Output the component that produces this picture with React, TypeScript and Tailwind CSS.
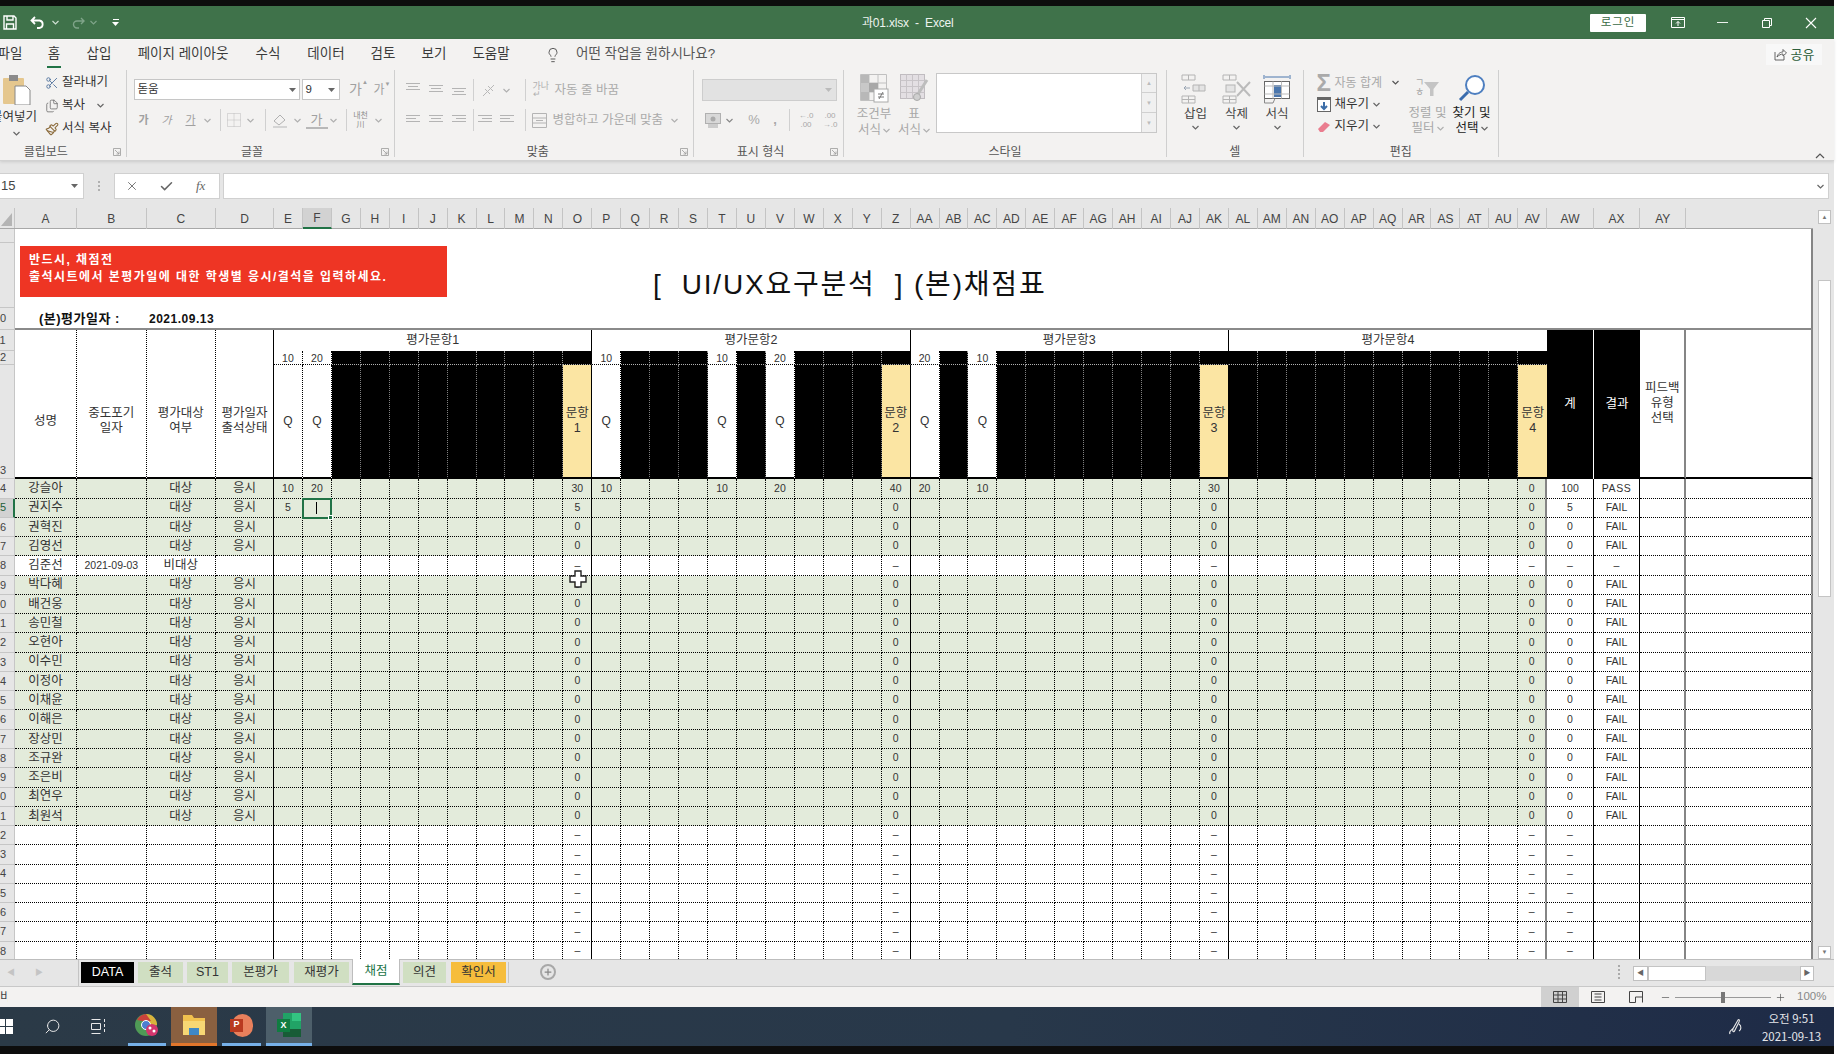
import React from "react";
import { Scissors, Files, Paintbrush, Lightbulb, Search, X, Check, Minus, Plus } from "lucide-react";

const COLS = ["A","B","C","D","E","F","G","H","I","J","K","L","M","N","O","P","Q","R","S","T","U","V","W","X","Y","Z","AA","AB","AC","AD","AE","AF","AG","AH","AI","AJ","AK","AL","AM","AN","AO","AP","AQ","AR","AS","AT","AU","AV","AW","AX","AY",""];
const GRID = "grid grid-cols-[62px_69.7px_69.3px_58px_repeat(44,28.95px)_46.6px_46.4px_46px_126.5px]";
const Q: Record<number, string> = { 4: "10", 5: "20", 15: "10", 19: "10", 21: "20", 26: "20", 28: "10" };
const SUMS: Record<number, string> = { 14: "1", 25: "2", 36: "3", 47: "4" };
const ROW14: Record<number, string> = { 4: "10", 5: "20", 14: "30", 15: "10", 19: "10", 21: "20", 25: "40", 26: "20", 28: "10", 36: "30", 47: "0", 48: "100", 49: "PASS" };
const ROW15: Record<number, string> = { 4: "5", 14: "5", 25: "0", 36: "0", 47: "0", 48: "5", 49: "FAIL" };
const ROWN: Record<number, string> = { 14: "0", 25: "0", 36: "0", 47: "0", 48: "0", 49: "FAIL" };
const ROWD: Record<number, string> = { 14: "–", 25: "–", 36: "–", 47: "–", 48: "–", 49: "–" };
const ROWB: Record<number, string> = { 14: "–", 25: "–", 36: "–", 47: "–", 48: "–" };
const NAMES = ["강슬아","권지수","권혁진","김영선","김준선","박다혜","배건웅","송민철","오현아","이수민","이정아","이채윤","이해은","장상민","조규완","조은비","최연우","최원석"];

function vr(i: number) {
  if (i === 3 || i === 14 || i === 25 || i === 36 || i === 48 || i === 49) return "border-r border-r-black";
  if (i === 47 || i === 50 || i === 51) return "border-r-2 border-r-[#858585]";
  return "border-r border-r-black [border-right-style:dotted]";
}

function Chev({ c = "#666", cls = "" }: { c?: string; cls?: string }) {
  return (
    <svg width="7" height="5" viewBox="0 0 7 5" className={cls}>
      <polyline points="0.5,1 3.5,4 6.5,1" fill="none" stroke={c} strokeWidth="1.2" />
    </svg>
  );
}
function Caret({ c = "#666" }: { c?: string }) {
  return (
    <svg width="7" height="4" viewBox="0 0 7 4">
      <polygon points="0,0 7,0 3.5,4" fill={c} />
    </svg>
  );
}
function Launcher() {
  return (
    <svg width="8" height="8" viewBox="0 0 8 8">
      <path d="M0.5 0.5H7.5V7.5H0.5Z M2 2L6 6 M6 3.5V6H3.5" fill="none" stroke="#9a9a9a" strokeWidth="0.8" />
    </svg>
  );
}
function Lines({ y = 0, align = "c" }: { y?: number; align?: string }) {
  const a = align === "l" ? [[0, 14], [0, 10], [0, 14]] : align === "r" ? [[0, 14], [4, 14], [0, 14]] : [[0, 14], [2, 12], [0, 14]];
  return (
    <svg width="14" height="14" viewBox="0 0 14 14">
      {a.map((p, i) => (
        <line key={i} x1={p[0]} x2={p[1]} y1={y + 2.5 + i * 3} y2={y + 2.5 + i * 3} stroke="#b4b4b4" strokeWidth="1" />
      ))}
    </svg>
  );
}
function Sep() {
  return <div className="w-px h-[22px] bg-[#d0d0d0]" />;
}
function Group({ w, label, lab = "", launcher, children }: { w: string; label: string; lab?: string; launcher?: boolean; children: React.ReactNode }) {
  return (
    <div className={`${w} h-[87px] border-r border-[#cfcfcf] flex flex-col shrink-0`}>
      <div className="h-[75px] flex shrink-0">{children}</div>
      <div className="h-[15px] flex items-center relative">
        <div className={`flex-1 text-center text-[12px] leading-[15px] text-[#555] ${lab}`}>{label}</div>
        {launcher && <div className="absolute right-[5px] top-[3px]"><Launcher /></div>}
      </div>
    </div>
  );
}

function TitleBar() {
  return (
    <div className="h-[33px] bg-[#3f724a] flex items-center text-white shrink-0">
      <svg width="14" height="15" viewBox="0 0 14 15" className="ml-[3px]">
        <path d="M1 1H11L13 3V14H1Z M4 1V5H10V1 M3.5 14V9H10.5V14" fill="none" stroke="#fff" strokeWidth="1.4" />
      </svg>
      <svg width="16" height="14" viewBox="0 0 16 14" className="ml-[13px]">
        <path d="M5 1L1.5 4.5L5 8 M2 4.5H9.5A3.8 3.8 0 0 1 9.5 12H7" fill="none" stroke="#fff" strokeWidth="1.8" />
      </svg>
      <Chev c="#cfe0d3" cls="ml-[6px]" />
      <svg width="14" height="14" viewBox="0 0 14 14" className="ml-[12px]">
        <path d="M10 2L13 5L10 8 M12.5 5H6A3.5 3.5 0 0 0 6 12H8" fill="none" stroke="#7fa489" strokeWidth="1.4" />
      </svg>
      <Chev c="#7fa489" cls="ml-[5px]" />
      <div className="ml-[15px] flex flex-col items-center gap-[2px]">
        <div className="w-[6px] h-px bg-white" />
        <Caret c="#fff" />
      </div>
      <div className="ml-[743px] w-[96px] text-[12px] text-[#eef4ef] whitespace-nowrap tracking-[-0.2px]">과01.xlsx&nbsp; - &nbsp;Excel</div>
      <div className="ml-[632px] w-[56px] h-[18px] bg-white rounded-[1px] flex items-center justify-center text-[11.5px] text-[#3a6a45] tracking-[1px] shrink-0">로그인</div>
      <div className="ml-[10px] w-[44px] flex justify-center">
        <svg width="14" height="11" viewBox="0 0 14 11">
          <path d="M0.5 0.5H13.5V10.5H0.5Z M0.5 2.5H13.5 M7 9V4.5 M5 6.5L7 4.5L9 6.5" fill="none" stroke="#fff" strokeWidth="1" />
        </svg>
      </div>
      <div className="w-[44px] flex justify-center"><div className="w-[11px] h-px bg-white/90" /></div>
      <div className="w-[45px] flex justify-center">
        <svg width="10" height="10" viewBox="0 0 10 10">
          <path d="M0.5 2.5H7.5V9.5H0.5Z M2.5 2.5V0.5H9.5V7.5H7.5" fill="none" stroke="#fff" strokeWidth="1" />
        </svg>
      </div>
      <div className="w-[44px] flex justify-center">
        <svg width="12" height="12" viewBox="0 0 12 12">
          <path d="M1 1L11 11 M11 1L1 11" stroke="#fff" strokeWidth="1.1" />
        </svg>
      </div>
    </div>
  );
}

function TabRow() {
  const t = "flex justify-center whitespace-nowrap shrink-0";
  return (
    <div className="h-[31px] flex items-center text-[13.5px] text-[#3a3a3a]">
      <div className={`w-[20px] ${t}`}>파일</div>
      <div className={`w-[68px] ${t} relative`}>홈<div className="absolute left-[27px] top-[22px] w-[14px] h-[2px] bg-[#217346]" /></div>
      <div className={`w-[22px] ${t}`}>삽입</div>
      <div className={`w-[146px] ${t}`}>페이지 레이아웃</div>
      <div className={`w-[24px] ${t}`}>수식</div>
      <div className={`w-[92px] ${t}`}>데이터</div>
      <div className={`w-[22px] ${t}`}>검토</div>
      <div className={`w-[80px] ${t}`}>보기</div>
      <div className={`w-[34px] ${t}`}>도움말</div>
      <Lightbulb size={16} strokeWidth={1.3} className="ml-[37px] text-[#444] shrink-0" />
      <div className="ml-[15px] text-[#555] whitespace-nowrap">어떤 작업을 원하시나요?</div>
      <div className="flex-1" />
      <div className="mr-[12px] w-[56px] h-[21px] bg-[#f8f8f8] flex items-center justify-center gap-[4px] text-[#2f5f3b] text-[13px] shrink-0">
        <svg width="13" height="13" viewBox="0 0 13 13"><path d="M1 4V12H10V8 M3 9C4 5 7 4 9 4V1.5L12.5 5L9 8V6C7 6 5 7 3 9Z" fill="none" stroke="#555" strokeWidth="0.9" /></svg>
        공유
      </div>
    </div>
  );
}

function Clipboard() {
  return (
    <>
      <div className="w-[45px] flex flex-col items-start shrink-0">
        <svg width="28" height="30" viewBox="0 0 28 30" className="ml-[3px] mt-[5px]">
          <rect x="0" y="3" width="21" height="26" rx="1" fill="#e5c78e" />
          <rect x="6" y="0" width="9" height="6" fill="#8b8b8b" />
          <path d="M12 11H23L27 15V30H12Z" fill="#fff" stroke="#888" strokeWidth="1" />
        </svg>
        <div className="-ml-[9px] mt-[4px] w-[52px] text-[12.5px] leading-[16px] text-[#333] whitespace-nowrap">붙여넣기</div>
        <Chev cls="ml-[13px] mt-[6px]" />
      </div>
      <div className="flex flex-col pt-px text-[12.5px] text-[#333] whitespace-nowrap">
        <div className="h-[23px] flex items-center gap-[3px]"><Scissors size={14} className="text-[#4d6f9a]" strokeWidth={1.5} />잘라내기</div>
        <div className="h-[23px] flex items-center gap-[3px]"><Files size={14} className="text-[#666]" strokeWidth={1.3} />복사<Chev cls="ml-[9px]" /></div>
        <div className="h-[23px] flex items-center gap-[3px]"><Paintbrush size={14} className="text-[#8a6a3a]" strokeWidth={1.8} />서식 복사</div>
      </div>
    </>
  );
}

function FontGroup() {
  const g = "text-[11px] text-[#a0a0a0] flex justify-center";
  return (
    <div className="flex flex-col pl-[7px]">
      <div className="flex items-center h-[21px] mt-[9px]">
        <div className="w-[166px] h-[21px] bg-white border border-[#c6c6c6] flex items-center justify-between px-[3px] text-[11.5px] text-[#333]">돋움<Caret /></div>
        <div className="ml-[2px] w-[38px] h-[21px] bg-white border border-[#c6c6c6] flex items-center justify-between px-[3px] pr-[4px] text-[11.5px] text-[#333]">9<Caret /></div>
        <div className="ml-[8px] w-[22px] text-[#a0a0a0] text-[14px] flex justify-center">가<span className="text-[6px] -mt-[1px]">▲</span></div>
        <div className="ml-[1px] w-[23px] text-[#a0a0a0] text-[12px] flex justify-center">가<span className="text-[6px] -mt-[1px]">▼</span></div>
      </div>
      <div className="flex items-center h-[22px] mt-[9px]">
        <div className={`w-[20px] ${g} font-bold`}>가</div>
        <div className={`w-[26px] ${g} italic`}>가</div>
        <div className={`w-[22px] ${g} underline`}>가</div>
        <div className="w-[12px] flex justify-center"><Chev c="#b0b0b0" /></div>
        <div className="w-[6px]" /><Sep />
        <div className="w-[26px] flex justify-center">
          <svg width="14" height="14" viewBox="0 0 14 14"><path d="M0.5 0.5H13.5V13.5H0.5Z M7 0.5V13.5 M0.5 7H13.5" fill="none" stroke="#bcbcbc" strokeDasharray="1 1" /></svg>
        </div>
        <div className="w-[10px]"><Chev c="#b0b0b0" /></div>
        <div className="w-[8px]" /><Sep />
        <div className="w-[28px] flex justify-center">
          <svg width="16" height="16" viewBox="0 0 16 16"><path d="M2 9L8 3L13 8L7 13Z" fill="none" stroke="#b0b0b0" /><rect x="1" y="14" width="14" height="2" fill="#d4d4d4" /></svg>
        </div>
        <div className="w-[12px]"><Chev c="#b0b0b0" /></div>
        <div className="w-[22px] text-[13px] text-[#a0a0a0] flex justify-center border-b-2 border-[#b8b8b8] leading-[15px]">가</div>
        <div className="w-[12px] flex justify-center"><Chev c="#b0b0b0" /></div>
        <div className="w-[6px]" /><Sep />
        <div className="w-[28px] text-[8px] leading-[9px] text-[#8d8d8d] text-center">내천<br />川</div>
        <div><Chev c="#b0b0b0" /></div>
      </div>
    </div>
  );
}

function AlignGroup() {
  return (
    <div className="flex flex-col pl-[11px]">
      <div className="flex items-center h-[22px] mt-[9px]">
        <div className="w-[23px]"><Lines y={-2} /></div>
        <div className="w-[23px]"><Lines /></div>
        <div className="w-[21px]"><Lines y={3} /></div>
        <Sep />
        <div className="w-[29px] flex justify-center">
          <svg width="15" height="15" viewBox="0 0 15 15"><path d="M2 13L13 2 M4 6L9 11 M7 3L12 8" stroke="#b8b8b8" fill="none" /></svg>
        </div>
        <Chev c="#b0b0b0" />
        <div className="w-[15px]" /><Sep />
        <div className="w-[29px] text-[9px] leading-[8px] text-[#b0b0b0] pl-[7px]">가나<br />↵</div>
        <div className="text-[12.5px] text-[#ababab] whitespace-nowrap">자동 줄 바꿈</div>
      </div>
      <div className="flex items-center h-[22px] mt-[8px]">
        <div className="w-[23px]"><Lines align="l" /></div>
        <div className="w-[23px]"><Lines /></div>
        <div className="w-[21px]"><Lines align="r" /></div>
        <Sep />
        <div className="w-[23px] flex justify-center"><Lines align="r" /></div>
        <div className="w-[21px] flex justify-center"><Lines align="l" /></div>
        <div className="w-[7px]" /><Sep />
        <div className="w-[27px] flex justify-center">
          <svg width="15" height="15" viewBox="0 0 15 15"><path d="M0.5 0.5H14.5V14.5H0.5Z M0.5 5H14.5 M0.5 10H14.5 M4 7.5H11" fill="none" stroke="#b4b4b4" /></svg>
        </div>
        <div className="text-[12.5px] text-[#ababab] whitespace-nowrap">병합하고 가운데 맞춤</div>
        <Chev c="#b0b0b0" cls="ml-[8px]" />
      </div>
    </div>
  );
}

function NumberGroup() {
  return (
    <div className="flex flex-col pl-[8px]">
      <div className="mt-[9px] w-[135px] h-[22px] bg-[#e2e2e2] border border-[#cdcdcd] flex items-center justify-end pr-[4px]"><Caret c="#bbb" /></div>
      <div className="flex items-center h-[22px] mt-[8px] text-[#a8a8a8]">
        <svg width="16" height="15" viewBox="0 0 16 15" className="ml-[3px]"><rect x="0.5" y="0.5" width="15" height="10" fill="#d8d8d8" stroke="#b0b0b0" /><circle cx="8" cy="6" r="2.5" fill="#aaa" /><rect x="3" y="11" width="10" height="4" fill="#ccc" /></svg>
        <Chev c="#888" cls="ml-[5px]" />
        <div className="ml-[12px] w-[18px] text-[13px] text-center">%</div>
        <div className="ml-[7px] w-[10px] text-[13px] font-bold text-center">,</div>
        <div className="ml-[9px]"><Sep /></div>
        <div className="ml-[6px] w-[20px] text-[8px] leading-[9px] text-center">←.0<br />.00</div>
        <div className="ml-[4px] w-[20px] text-[8px] leading-[9px] text-center">.00<br />→.0</div>
      </div>
    </div>
  );
}

function CondIcon() {
  return (
    <svg width="29" height="29" viewBox="0 0 29 29">
      <path d="M0.5 0.5H26.5V26.5H0.5Z M9 0.5V26.5 M18 0.5V26.5 M0.5 9H26.5 M0.5 18H26.5" fill="#f3f2f1" stroke="#c0c0c0" />
      <rect x="1" y="1" width="8" height="8" fill="#b8b8b8" /><rect x="9" y="9" width="9" height="9" fill="#a8a8a8" /><rect x="1" y="9" width="8" height="9" fill="#c8c8c8" /><rect x="1" y="18" width="8" height="8" fill="#b8b8b8" />
      <rect x="14" y="15" width="14" height="13" fill="#fff" stroke="#aaa" />
      <path d="M18 20H24 M18 23H24 M19 25L23 18" stroke="#777" fill="none" />
    </svg>
  );
}
function TableIcon() {
  return (
    <svg width="29" height="29" viewBox="0 0 29 29">
      <rect x="0.5" y="0.5" width="24" height="24" fill="#e3dfe3" stroke="#c0bcc0" />
      <path d="M0.5 6.5H24.5 M0.5 12.5H24.5 M0.5 18.5H24.5 M6.5 0.5V24.5 M12.5 0.5V24.5 M18.5 0.5V24.5" stroke="#c8c4c8" />
      <path d="M27 6L18 20" stroke="#bdbdbd" strokeWidth="3" /><circle cx="17" cy="23" r="3.5" fill="#cfcfcf" stroke="#aaa" />
    </svg>
  );
}
function StyleGroup() {
  return (
    <div className="flex pl-[10px] text-[12.5px] leading-[16px] text-[#a8a8a8]">
      <div className="w-[40px] flex flex-col items-center pt-[4px]"><CondIcon /><div className="mt-[3px] whitespace-nowrap">조건부</div><div className="flex items-center gap-[2px] whitespace-nowrap">서식<Chev c="#b0b0b0" /></div></div>
      <div className="w-[40px] flex flex-col items-center pt-[4px]"><TableIcon /><div className="mt-[3px]">표</div><div className="flex items-center gap-[2px] whitespace-nowrap">서식<Chev c="#b0b0b0" /></div></div>
      <div className="ml-[2px] mt-[3px] w-[221px] h-[60px] bg-white border border-[#c8c8c8] flex justify-end">
        <div className="w-[15px] border-l border-[#d0d0d0] bg-[#f0f0f0] flex flex-col">
          <div className="h-[19px] border-b border-[#d0d0d0] flex items-center justify-center text-[6px] text-[#bbb]">▲</div>
          <div className="h-[20px] border-b border-[#d0d0d0] flex items-center justify-center text-[6px] text-[#bbb]">▼</div>
          <div className="flex-1 flex items-center justify-center text-[6px] text-[#bbb]">▼</div>
        </div>
      </div>
    </div>
  );
}

function CellIcon({ kind }: { kind: string }) {
  if (kind === "format")
    return (
      <svg width="28" height="30" viewBox="0 0 28 30">
        <path d="M1 1V5 M27 1V5 M2 3H26" stroke="#4a76ad" fill="none" />
        <rect x="1.5" y="7.5" width="25" height="17" fill="#fff" stroke="#666" />
        <rect x="11" y="11" width="7" height="12" fill="#4a76ad" />
        <path d="M1.5 12H26.5 M1.5 20H26.5 M10 7.5V24.5 M18.5 7.5V24.5" stroke="#bbb" fill="none" />
        <path d="M1.5 24.5V29H10L12 24.5" stroke="#888" fill="none" />
      </svg>
    );
  return (
    <svg width="30" height="30" viewBox="0 0 30 30">
      <path d="M1 1H14V6H1Z M7.5 1V6 M1 22H14V29H1Z M1 25.5H14 M7.5 22V29" fill="none" stroke="#b4b4b4" />
      {kind === "insert" ? (
        <>
          <path d="M12 11H24V17H12Z M18 11V17" fill="#e4e4e4" stroke="#b4b4b4" />
          <path d="M9 14H3 M5 12L3 14L5 16" stroke="#9aa6b4" fill="none" />
        </>
      ) : (
        <>
          <rect x="4" y="11" width="9" height="7" fill="#e4e4e4" stroke="#b4b4b4" />
          <path d="M15 8L28 22 M28 8L15 22" stroke="#bbb" strokeWidth="2" />
        </>
      )}
    </svg>
  );
}
function CellsGroup() {
  const items: [string, string, string][] = [["insert", "삽입", "w-[41px]"], ["delete", "삭제", "w-[41px]"], ["format", "서식", "w-[40px]"]];
  return (
    <div className="flex pl-[8px]">
      {items.map(([k, l, w]) => (
        <div key={k} className={`${w} flex flex-col items-center pt-[4px] text-[12.5px] leading-[14px] text-[#444]`}>
          <CellIcon kind={k} />
          <div className="mt-[3px]">{l}</div>
          <Chev cls="mt-[4px]" />
        </div>
      ))}
    </div>
  );
}

function EditGroup() {
  return (
    <div className="flex pl-[13px] text-[12.5px] whitespace-nowrap">
      <div className="flex flex-col w-[88px] shrink-0">
        <div className="h-[23px] mt-[1px] flex items-center text-[#a8a8a8]">
          <span className="text-[24px] leading-[20px] font-bold text-[#aaa] w-[18px]">Σ</span><span className="text-[12px]">자동 합계</span><Chev c="#555" cls="ml-[10px]" />
        </div>
        <div className="h-[21px] flex items-center text-[#333] gap-[4px]">
          <svg width="14" height="15" viewBox="0 0 14 15"><rect x="0.5" y="0.5" width="13" height="14" fill="#fff" stroke="#666" /><rect x="0" y="0" width="14" height="3" fill="#666" /><path d="M7 5V12 M4 9L7 12L10 9" stroke="#3d6ea8" strokeWidth="2" fill="none" /></svg>
          채우기<Chev />
        </div>
        <div className="h-[22px] flex items-center text-[#333] gap-[4px]">
          <svg width="14" height="13" viewBox="0 0 14 13"><path d="M1 9L8 2L13 5L6 12H3Z" fill="#ea7d8f" /></svg>
          지우기<Chev />
        </div>
      </div>
      <div className="w-[46px] shrink-0 flex flex-col items-center pt-[5px] leading-[15px] text-[#a8a8a8]">
        <div className="h-[26px] flex items-center text-[10px]">
          <span className="leading-[10px] text-center">ㄱ<br />ㅎ</span>
          <svg width="16" height="16" viewBox="0 0 16 16"><path d="M0 2H15L9.5 9V16H6V9Z" fill="#c4c4c4" /></svg>
        </div>
        <div className="mt-[5px]">정렬 및</div>
        <div className="flex items-center gap-[2px]">필터<Chev c="#b0b0b0" /></div>
      </div>
      <div className="w-[42px] shrink-0 flex flex-col items-center pt-[5px] leading-[15px] text-[#222]">
        <svg width="28" height="27" viewBox="0 0 28 27">
          <circle cx="17" cy="10" r="9" fill="#fff" stroke="#4e7fc0" strokeWidth="2" />
          <path d="M10 17L2 25" stroke="#3a6cad" strokeWidth="3" />
        </svg>
        <div className="mt-[4px]">찾기 및</div>
        <div className="flex items-center gap-[2px]">선택<Chev /></div>
      </div>
    </div>
  );
}

function Ribbon() {
  return (
    <div className="h-[122px] bg-[#f3f2f1] shrink-0 border-b border-[#d2d2d2] shadow-[0_1px_3px_rgba(0,0,0,0.12)] relative z-10">
      <TabRow />
      <div className="flex h-[87px] relative">
        <Group w="w-[126.5px]" label="클립보드" lab="pr-[34px]" launcher><Clipboard /></Group>
        <Group w="w-[268px]" label="글꼴" lab="pr-[16px]" launcher><FontGroup /></Group>
        <Group w="w-[299.5px]" label="맞춤" lab="pr-[12px]" launcher><AlignGroup /></Group>
        <Group w="w-[150px]" label="표시 형식" lab="pr-[16px]" launcher><NumberGroup /></Group>
        <Group w="w-[323px]" label="스타일"><StyleGroup /></Group>
        <Group w="w-[136.5px]" label="셀"><CellsGroup /></Group>
        <Group w="w-[195.5px]" label="편집"><EditGroup /></Group>
        <div className="flex-1 flex items-end justify-end pr-[9px]">
          <svg width="10" height="6" viewBox="0 0 10 6" className="-mb-[2px]"><polyline points="1,5 5,1 9,5" fill="none" stroke="#555" strokeWidth="1.2" /></svg>
        </div>
      </div>
    </div>
  );
}

function FormulaBar() {
  return (
    <div className="h-[47px] bg-[#e6e6e6] flex items-start pt-[12px] shrink-0">
      <div className="w-[84px] h-[26px] bg-white border border-[#d0d0d0] border-l-0 flex items-center justify-between pl-[1px] pr-[5px] text-[13px] text-[#444]">15<Caret /></div>
      <div className="w-[30px] h-[26px] flex flex-col items-center justify-center gap-[2px]">
        <div className="w-[2px] h-[2px] bg-[#b0b0b0]" /><div className="w-[2px] h-[2px] bg-[#b0b0b0]" /><div className="w-[2px] h-[2px] bg-[#b0b0b0]" />
      </div>
      <div className="w-[106px] h-[26px] bg-white border border-[#d0d0d0] flex items-center text-[#666]">
        <X size={14} strokeWidth={1.5} className="ml-[10px]" />
        <Check size={15} strokeWidth={2.4} className="ml-[20px]" />
        <span className="ml-[22px] text-[13px] italic font-['Liberation_Serif',serif]">fx</span>
      </div>
      <div className="ml-[3px] w-[1606px] h-[26px] bg-white border border-[#d0d0d0] flex items-center justify-end pr-[4px]"><Chev cls="" /></div>
    </div>
  );
}

function ColHeader() {
  return (
    <div className="h-[21px] bg-[#e6e6e6] flex border-b border-[#a8a8a8] shrink-0">
      <div className="w-[15px] border-r border-[#c4c4c4] flex items-end justify-end pr-[2px] pb-[2px] shrink-0">
        <svg width="11" height="13" viewBox="0 0 11 13"><polygon points="11,0 11,13 0,13" fill="#b4b4b4" /></svg>
      </div>
      <div className={`${GRID} h-full`}>
        {COLS.map((c, i) => (
          <div key={i} className={`h-[21px] flex items-center justify-center text-[12px] text-[#444] ${i === 51 ? "" : "border-r border-[#c4c4c4]"} ${i === 5 ? "bg-[#d2d2d2] border-b-2 border-b-[#217346] text-[#1f5f38]" : ""}`}>{c}</div>
        ))}
      </div>
    </div>
  );
}

function RowHead({ label, h, active }: { label: string; h: string; active?: boolean }) {
  return (
    <div className={`${h} shrink-0 w-[15px] overflow-hidden flex items-center border-b border-r border-[#c6c6c6] ${active ? "bg-[#d2d2d2] border-r-2 border-r-[#217346] text-[#1f5f38]" : "bg-[#e6e6e6] text-[#444]"}`}>
      <div className="w-[30px] -ml-[15px] text-center text-[11px] shrink-0">{label}</div>
    </div>
  );
}

function RowHeads() {
  const rows = Array.from({ length: 25 }, (_, i) => i + 14);
  return (
    <div className="w-[15px] shrink-0 flex flex-col">
      <RowHead label="" h="h-[14px]" />
      <RowHead label="" h="h-[65px]" />
      <RowHead label="10" h="h-[22px]" />
      <RowHead label="11" h="h-[21px]" />
      <RowHead label="12" h="h-[14.3px]" />
      <div className="h-[114px] shrink-0 w-[15px] overflow-hidden flex items-end border-b border-r border-[#c6c6c6] bg-[#e6e6e6] text-[#444]">
        <div className="w-[30px] -ml-[15px] text-center text-[11px] shrink-0">13</div>
      </div>
      {rows.map((r) => <RowHead key={r} label={String(r)} h="h-[19.27px]" active={r === 15} />)}
    </div>
  );
}

function HeaderCells() {
  const labels = ["성명", "중도포기\n일자", "평가대상\n여부", "평가일자\n출석상태"];
  const hd = "text-[12.5px] text-[#333]";
  const cells: React.ReactNode[] = [];
  labels.forEach((l, i) => {
    cells.push(
      <div key={`h${i}`} className={`row-span-3 pt-[35px] flex items-center justify-center text-center whitespace-pre-line leading-[15px] ${hd} border-b-2 border-b-black ${vr(i)}`}>{l}</div>
    );
  });
  const groups: [string, string, string][] = [
    ["평가문항1", "col-span-11", "border-r border-r-black"],
    ["평가문항2", "col-span-11", "border-r border-r-black"],
    ["평가문항3", "col-span-11", "border-r border-r-black"],
    ["평가문항4", "col-span-11", ""],
  ];
  groups.forEach(([l, s, b]) => {
    cells.push(<div key={l} className={`${s} ${b} flex items-center justify-center ${hd}`}>{l}</div>);
  });
  cells.push(<div key="aw" className="row-span-3 bg-black text-white border-r border-r-white flex items-center justify-center text-[12.5px]">계</div>);
  cells.push(<div key="ax" className="row-span-3 bg-black text-white flex items-center justify-center text-[12.5px]">결과</div>);
  cells.push(<div key="ay" className={`row-span-3 border-b-2 border-b-black border-r-2 border-r-[#858585] flex items-center justify-center text-center whitespace-pre-line leading-[15px] ${hd}`}>{"피드백\n유형\n선택"}</div>);
  cells.push(<div key="az" className="row-span-3 border-b-2 border-b-black border-r-2 border-r-[#858585]" />);
  for (let i = 4; i <= 47; i++) {
    const q = Q[i];
    const solid = i === 14 || i === 25 || i === 36;
    cells.push(
      q ? (
        <div key={`a${i}`} className={`flex items-center justify-center text-[10.5px] leading-[12px] text-[#333] border-b border-b-black [border-bottom-style:dotted] ${vr(i)}`}>{q}</div>
      ) : (
        <div key={`a${i}`} className={`bg-black border-b border-b-white/70 [border-bottom-style:dotted] ${solid ? "border-r border-r-black" : i === 47 ? "" : "border-r border-r-white/60 [border-right-style:dotted]"}`} />
      )
    );
  }
  for (let i = 4; i <= 47; i++) {
    const q = Q[i];
    const s = SUMS[i];
    const solid = i === 36 || i === 47;
    cells.push(
      q ? (
        <div key={`b${i}`} className={`flex items-center justify-center text-[12px] text-[#333] border-b-2 border-b-black ${vr(i)}`}>Q</div>
      ) : s ? (
        <div key={`b${i}`} className={`bg-[#fbe5a3] flex items-center justify-center text-center whitespace-pre-line leading-[15px] ${hd} border-b-2 border-b-black ${i === 47 ? "" : "border-r border-r-black"}`}>{`문항\n${s}`}</div>
      ) : (
        <div key={`b${i}`} className={`bg-black border-b-2 border-b-black ${solid ? "" : "border-r border-r-white/50 [border-right-style:dotted]"}`} />
      )
    );
  }
  return <>{cells}</>;
}

function DataRow({ r }: { r: number }) {
  const name = NAMES[r - 14];
  const isNamed = r <= 31;
  const green = isNamed && r !== 18;
  const values = r === 14 ? ROW14 : r === 15 ? ROW15 : r === 18 ? ROWD : isNamed ? ROWN : ROWB;
  const cells = [];
  for (let i = 0; i < 52; i++) {
    let t: string = values[i] ?? "";
    if (i === 0 && isNamed) t = name;
    if (i === 1 && r === 18) t = "2021-09-03";
    if (i === 2 && isNamed) t = r === 18 ? "비대상" : "대상";
    if (i === 3 && green) t = "응시";
    const bg = green && i <= 47 ? "bg-[#e3ebdb]" : "bg-white";
    const small = i >= 4 || i === 1;
    const selected = r === 15 && i === 5;
    cells.push(
      <div key={i} className={`relative flex items-center justify-center whitespace-nowrap text-[#333] ${small ? "text-[10.5px]" : "text-[12.5px]"} ${t === "PASS" ? "tracking-[0.6px]" : ""} ${bg} border-b border-b-black [border-bottom-style:dotted] ${vr(i)}`}>
        {t}
        {selected && (
          <div className="absolute -left-[1px] -top-[1px] w-[30px] h-[21px] border-2 border-[#217346] z-10 flex items-center justify-center bg-[#e3ebdb]">
            <div className="w-px h-[12px] bg-black" />
            <div className="absolute -right-[3px] -bottom-[3px] w-[5px] h-[5px] bg-[#217346] border border-white" />
          </div>
        )}
      </div>
    );
  }
  return <>{cells}</>;
}

function Sheet() {
  const rows = Array.from({ length: 25 }, (_, i) => i + 14);
  return (
    <div className="h-[730px] flex overflow-hidden">
      <RowHeads />
      <div className="flex flex-col w-[1798px]">
        <div className="h-[101px] shrink-0 border-b-2 border-[#8a8a8a] border-r-2 border-r-[#858585] flex flex-col">
          <div className="h-[80px] flex">
            <div className="ml-[5px] mt-[17px] w-[427px] h-[51px] bg-[#ee3524] text-white font-bold text-[12px] leading-[17px] pl-[9px] pt-[6px] tracking-[1.45px] shrink-0 whitespace-nowrap">
              <div>반드시, 채점전</div>
              <div>출석시트에서 본평가일에 대한 학생별 응시/결석을 입력하세요.</div>
            </div>
            <div className="ml-[206px] mt-[36px] text-[28px] leading-[40px] text-[#111] whitespace-nowrap tracking-[1.8px]">[&nbsp;&nbsp;UI/UX요구분석&nbsp;&nbsp;]&nbsp;(본)채점표</div>
          </div>
          <div className="h-[19px] flex items-center font-bold text-[#111] pl-[24px]">
            <div className="w-[110px] text-[13px] tracking-[0.5px] whitespace-nowrap">(본)평가일자 :</div>
            <div className="text-[12px] tracking-[0.5px]">2021.09.13</div>
          </div>
        </div>
        <div className={`${GRID} grid-rows-[21px_14.3px_114px_repeat(25,19.27px)]`}>
          <HeaderCells />
          {rows.map((r) => <DataRow key={r} r={r} />)}
        </div>
      </div>
    </div>
  );
}

function VScroll() {
  return (
    <div className="w-[21px] bg-[#e6e6e6] flex flex-col pl-[5px] pr-[3px] pt-[2px] shrink-0">
      <div className="h-[14px] bg-white border border-[#c0c0c0] flex items-center justify-center text-[6px] text-[#777]">▲</div>
      <div className="h-[56px]" />
      <div className="h-[317px] bg-white border border-[#c4c4c4]" />
      <div className="flex-1" />
      <div className="h-[13px] bg-white border border-[#c0c0c0] flex items-center justify-center text-[6px] text-[#777]">▼</div>
    </div>
  );
}

function SheetTabs() {
  const t = "h-[21px] flex items-center justify-center text-[12.5px] shrink-0";
  const green = `${t} bg-[#d0dfc2] text-[#333]`;
  return (
    <div className="h-[27px] bg-[#e6e6e6] border-t border-[#bdbdbd] flex items-start shrink-0 relative">
      <div className="w-[79px] h-[26px] flex items-center text-[8px] text-[#c4c4c4] border-r border-[#c4c4c4]">
        <span className="ml-[7px]">◀</span><span className="ml-[20px]">▶</span>
      </div>
      <div className="flex items-start pt-[2px]">
        <div className={`ml-[2px] w-[53px] ${t} bg-black text-white`}>DATA</div>
        <div className={`ml-[4px] w-[45px] ${green}`}>출석</div>
        <div className={`ml-[4px] w-[41px] ${green}`}>ST1</div>
        <div className={`ml-[4px] w-[57px] ${green}`}>본평가</div>
        <div className={`ml-[5px] w-[55px] ${green}`}>재평가</div>
        <div className="ml-[3px] -mt-[3px] w-[48px] h-[26px] bg-white border-x border-[#bdbdbd] border-b-2 border-b-[#217346] flex items-center justify-center text-[12.5px] text-[#217346]">채점</div>
        <div className={`ml-[3px] w-[43px] ${green}`}>의견</div>
        <div className={`ml-[5px] w-[55px] ${t} bg-[#f6bd3c] text-[#333]`}>확인서</div>
        <div className="ml-[2px] w-px h-[21px] bg-[#c4c4c4]" />
      </div>
      <div className="ml-[31px] mt-[4px] w-[16px] h-[16px] rounded-full border-2 border-[#a8a8a8] flex items-center justify-center text-[#888]"><Plus size={10} strokeWidth={3} /></div>
      <div className="ml-[1062px] mt-[5px] flex flex-col gap-[2px]">
        <div className="w-[2px] h-[2px] bg-[#aaa]" /><div className="w-[2px] h-[2px] bg-[#aaa]" /><div className="w-[2px] h-[2px] bg-[#aaa]" /><div className="w-[2px] h-[2px] bg-[#aaa]" />
      </div>
      <div className="ml-[13px] mt-[6px] w-[181px] h-[15px] bg-[#d8d8d8] flex">
        <div className="w-[15px] bg-white border border-[#c0c0c0] flex items-center justify-center text-[7px] text-[#666]">◀</div>
        <div className="w-[58px] bg-white border border-[#c4c4c4]" />
        <div className="flex-1" />
        <div className="w-[14px] bg-white border border-[#c0c0c0] flex items-center justify-center text-[7px] text-[#666]">▶</div>
      </div>
    </div>
  );
}

function StatusBar() {
  return (
    <div className="h-[21px] bg-[#f3f2f1] border-t border-[#c8c8c8] flex items-center text-[12px] text-[#444] shrink-0">
      <div className="w-[8px] overflow-hidden whitespace-nowrap">비</div>
      <div className="ml-[1533px] w-[38px] h-[20px] bg-[#d0d0d0] flex items-center justify-center">
        <svg width="14" height="12" viewBox="0 0 14 12"><path d="M0.5 0.5H13.5V11.5H0.5Z M5 0.5V11.5 M9.5 0.5V11.5 M0.5 4H13.5 M0.5 8H13.5" fill="none" stroke="#444" /></svg>
      </div>
      <div className="w-[38px] flex justify-center">
        <svg width="14" height="12" viewBox="0 0 14 12"><path d="M0.5 0.5H13.5V11.5H0.5Z M3.5 3H10.5 M3.5 6H10.5 M3.5 9H10.5" fill="none" stroke="#444" /></svg>
      </div>
      <div className="w-[38px] flex justify-center">
        <svg width="14" height="12" viewBox="0 0 14 12"><path d="M0.5 11.5V0.5H13.5V11.5 M0.5 11.5H6.5V6H13.5" fill="none" stroke="#444" /></svg>
      </div>
      <Minus size={11} strokeWidth={1.5} className="ml-[5px] text-[#555]" />
      <div className="ml-[4px] w-[96px] h-px bg-[#999] flex items-center justify-center">
        <div className="w-[4px] h-[11px] bg-[#777] shrink-0" />
      </div>
      <Plus size={11} strokeWidth={1.5} className="ml-[4px] text-[#555]" />
      <div className="ml-[11px] text-[#888] text-[11.5px]">100%</div>
    </div>
  );
}

function Taskbar() {
  return (
    <div className="h-[39px] bg-[linear-gradient(90deg,#2b3a47_0%,#28384a_55%,#1e2b47_100%)] flex text-white shrink-0">
      <div className="w-[13px] h-full flex items-center justify-end overflow-hidden">
        <svg width="15" height="15" viewBox="0 0 15 15" className="shrink-0"><path d="M0 0H7V7H0Z M8 0H15V7H8Z M0 8H7V15H0Z M8 8H15V15H8Z" fill="#fff" /></svg>
      </div>
      <div className="ml-[30px] w-[18px] h-full flex items-center justify-center"><Search size={17} strokeWidth={1.4} className="-scale-x-100 text-[#e8e8e8]" /></div>
      <div className="ml-[29px] w-[16px] h-full flex items-center justify-center">
        <svg width="15" height="15" viewBox="0 0 15 15"><path d="M0.5 0.5H9.5 M0.5 4.5H9.5V10.5H0.5Z M0.5 14.5H9.5 M13.5 0V3 M13.5 5V8 M13.5 10V13" fill="none" stroke="#e8e8e8" /></svg>
      </div>
      <div className="ml-[22px] w-[38px] h-full border-b-[3px] border-[#76b0e8] flex items-center justify-center">
        <svg width="24" height="24" viewBox="0 0 24 24"><circle cx="11" cy="12" r="11" fill="#4f9a56" /><path d="M11 1A11 11 0 0 1 22 12H11Z" fill="#d9b23c" /><path d="M2 7A11 11 0 0 1 11 1L16 8H7Z" fill="#c9423b" /><circle cx="11" cy="12" r="4.5" fill="#4d7fd0" stroke="#fff" /><circle cx="17" cy="17" r="6" fill="#d4366e" /><circle cx="15" cy="15" r="1.5" fill="#fff" /><circle cx="19" cy="18" r="1.5" fill="#fff" /></svg>
      </div>
      <div className="ml-[5px] w-[46px] h-full bg-[#8a6040] border-b-[3px] border-[#e2762b] flex items-center justify-center">
        <svg width="22" height="20" viewBox="0 0 22 20"><path d="M0 0H9L11 3H22V20H0Z" fill="#f2c14e" /><rect x="0" y="6" width="22" height="14" fill="#f7d774" /><rect x="6" y="13" width="10" height="7" fill="#3f88c5" /></svg>
      </div>
      <div className="ml-[5px] w-[39px] h-full border-b-[3px] border-[#76b0e8] flex items-center justify-center">
        <div className="relative w-[23px] h-[23px]">
          <div className="absolute right-0 top-0 w-[21px] h-[23px] rounded-full bg-[#e8805c]" />
          <div className="absolute left-0 top-[5px] w-[13px] h-[13px] bg-[#b93a20] text-[9px] font-bold flex items-center justify-center">P</div>
        </div>
      </div>
      <div className="ml-[5px] w-[46px] h-full bg-[#4d5f6a] border-b-[3px] border-[#76b0e8] flex items-center justify-center">
        <div className="relative w-[24px] h-[24px]">
          <div className="absolute right-0 top-0 w-[18px] h-[24px] bg-[#21a366]" />
          <div className="absolute right-0 top-0 w-[9px] h-[8px] bg-[#33c481]" />
          <div className="absolute right-0 bottom-0 w-[18px] h-[8px] bg-[#185c37]" />
          <div className="absolute left-0 top-[6px] w-[13px] h-[13px] bg-[#107c41] text-[9px] font-bold flex items-center justify-center">X</div>
        </div>
      </div>
      <div className="flex-1" />
      <div className="w-[20px] h-full flex items-center justify-center text-[#ddd]">
        <svg width="15" height="18" viewBox="0 0 15 18"><path d="M2 16C0 13 5 12 6 9L10 2C11 1 12 2 11 4L7 12C6 15 4 14 5 11 M11 6C14 8 13 12 11 13" fill="none" stroke="#e8e8e8" strokeWidth="1.1" /></svg>
      </div>
      <div className="ml-[11px] w-[71px] flex flex-col items-center justify-center text-[11.5px] leading-[18px] text-[#e4e6ea] whitespace-nowrap font-['Noto_Sans_CJK_KR','Liberation_Sans',sans-serif]">
        <div>오전 9:51</div>
        <div>2021-09-13</div>
      </div>
      <div className="w-[7px]" />
    </div>
  );
}

export default function App() {
  return (
    <div className="w-[1846px] h-[1054px] bg-white overflow-hidden relative font-['Liberation_Sans','Noto_Sans_CJK_KR',sans-serif]">
      <div className="w-[1834px] h-[1054px] flex flex-col">
        <div className="h-[6px] bg-[#0d0d0d] shrink-0" />
        <TitleBar />
        <Ribbon />
        <FormulaBar />
        <div className="h-[751px] flex shrink-0">
          <div className="w-[1813px] flex flex-col">
            <ColHeader />
            <Sheet />
          </div>
          <VScroll />
        </div>
        <SheetTabs />
        <StatusBar />
        <Taskbar />
        <div className="h-[8px] bg-[#0d0d0d] shrink-0" />
      </div>
      <svg width="18" height="18" viewBox="0 0 18 18" className="absolute left-[569px] top-[570px] z-20">
        <path d="M6 1H12V6H17V12H12V17H6V12H1V6H6Z" fill="#fff" stroke="#222" strokeWidth="1.4" />
      </svg>
    </div>
  );
}
